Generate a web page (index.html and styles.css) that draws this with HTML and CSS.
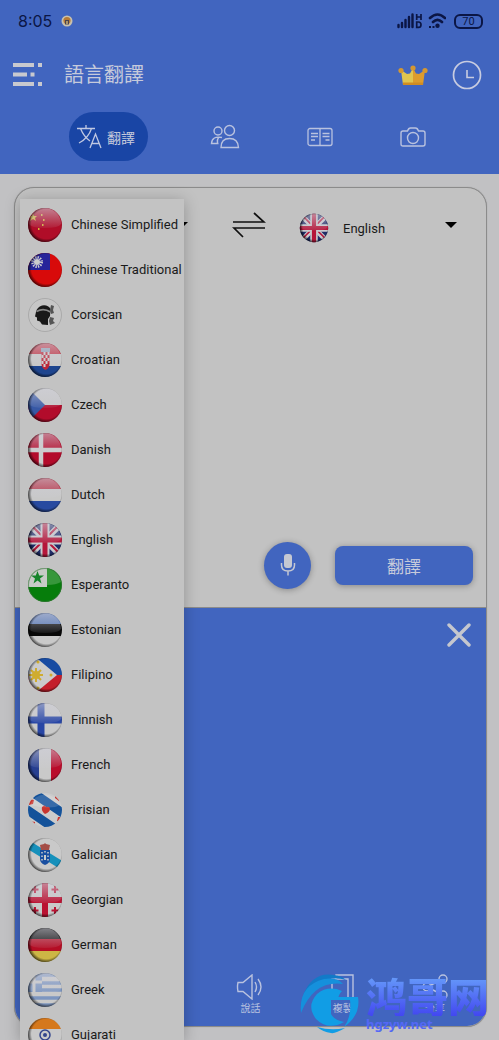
FILE: index.html
```html
<!DOCTYPE html>
<html lang="zh-Hant">
<head>
  <meta charset="UTF-8">
  <meta name="viewport" content="width=device-width, initial-scale=1">
  <title>語言翻譯</title>
  <link rel="stylesheet" href="styles.css">
</head>
<body>

  <!-- shared flag parts -->
  <svg class="defs" width="0" height="0" aria-hidden="true">
    <defs>
      <clipPath id="round"><circle cx="18" cy="18" r="17"/></clipPath>
      <linearGradient id="shine" x1="0" y1="0" x2="0" y2="1">
        <stop offset="0" stop-color="#d0d0da" stop-opacity=".6"/>
        <stop offset="1" stop-color="#d0d0da" stop-opacity=".08"/>
      </linearGradient>
      <radialGradient id="edge" cx=".54" cy=".47" r=".53">
        <stop offset=".82" stop-color="#000" stop-opacity="0"/>
        <stop offset="1" stop-color="#000" stop-opacity=".6"/>
      </radialGradient>
      <symbol id="gloss" viewBox="0 0 36 36">
        <path d="M2 17a16 16 0 0 1 32 0q-2 4-16 4T2 17z" fill="url(#shine)"/>
        <circle cx="18" cy="18" r="17" fill="url(#edge)"/>
      </symbol>
      <symbol id="uk" viewBox="0 0 36 36">
        <g clip-path="url(#round)">
          <path fill="#1f2c68" d="M0 0h36v36H0z"/>
          <path stroke="#c9c9cd" stroke-width="6" d="M2 2l32 32M34 2L2 34"/>
          <path stroke="#b5163a" stroke-width="2" d="M3 2l31 31M33 2L2 33"/>
          <path stroke="#c9c9cd" stroke-width="9" d="M18 0v36M0 18h36"/>
          <path stroke="#b5163a" stroke-width="5" d="M18 0v36M0 18h36"/>
        </g>
        <use href="#gloss"/>
      </symbol>
    </defs>
  </svg>

  <header class="header">
    <div class="status">
      <span class="time">8:05</span>
      <svg class="badge" width="12" height="12" viewBox="0 0 12 12" aria-hidden="true">
        <circle cx="6" cy="6" r="5.500" fill="#c9c1ad"/>
        <circle cx="6" cy="5.500" r="3.600" fill="#b77b35"/>
        <path d="M4 5h4v4.500H4z" fill="#4a4450"/><path d="M5.300 6h1.400v3H5.300z" fill="#d4b878"/>
      </svg>
      <svg class="signal" width="26" height="16" viewBox="0 0 26 16" aria-hidden="true">
        <path d="M1.500 12v2M5 10v4M8.500 7v7M12 4v10M15.500 1.500V14" stroke="#0b1645" stroke-width="2.400" stroke-linecap="round"/>
        <path d="M19.700 1v6M24 1v6M19.700 4H24M19.700 9h1.800q2.500 0 2.500 2.700t-2.500 2.700h-1.800z" fill="none" stroke="#0b1645" stroke-width="1.700"/>
      </svg>
      <svg width="18" height="16" viewBox="0 0 18 16" aria-hidden="true">
        <path d="M2 5q7.500-7 15 0M5 9q4.500-4.500 9 0" fill="none" stroke="#0b1645" stroke-width="2.600" stroke-linecap="round"/>
        <circle cx="9.500" cy="12.800" r="2.200" fill="#0b1645"/><path d="M1 13h2v2H1zM4.500 13h2v2h-2z" fill="#0b1645"/>
      </svg>
      <span class="battery">70</span>
    </div>

    <div class="title-row">
      <button class="icon-btn" aria-label="Menu">
        <svg width="30" height="26" viewBox="0 0 30 26">
          <path d="M0 3h21M25 3h4M0 12.500h14M17.500 12.500h4M0 22h21M25 22h4" stroke="#c8c9cf" stroke-width="4"/>
        </svg>
      </button>
      <h1>語言翻譯</h1>
      <button class="icon-btn" aria-label="Premium">
        <svg width="30" height="24" viewBox="0 0 30 24">
          <path d="M3 7l6 4 3-.5L15 5v17H5z" fill="#e0c54f"/>
          <path d="M27 7l-6 4-3-.5L15 5v17h10z" fill="#dd9c2c"/>
          <path d="M5 19.500h20V22H5z" fill="#d08c22"/>
          <circle cx="3" cy="7.500" r="2.600" fill="#d59730"/><circle cx="15" cy="5" r="2.600" fill="#d59730"/><circle cx="27" cy="7.500" r="2.600" fill="#d59730"/>
        </svg>
      </button>
      <button class="icon-btn" aria-label="History">
        <svg width="30" height="30" viewBox="0 0 30 30" fill="none" stroke="#c8cce0">
          <circle cx="15" cy="15" r="13.500" stroke-width="1.700"/><path d="M15 10v7.500h7" stroke-width="1.600"/>
        </svg>
      </button>
    </div>

    <nav class="tabs">
      <a class="tab active" href="#translate">
        <svg width="26" height="26" viewBox="0 0 26 26" fill="none" stroke="#c0c8e2" stroke-width="1.300">
          <path d="M1 4.500h18M10 1v3.500M15.500 4.500Q12.500 14 3 19M4.500 4.500Q8 13 14 17M14 24l5.500-14L25 24M16 19.500h7"/>
        </svg>
        <span>翻譯</span>
      </a>
      <a class="tab" href="#chat" aria-label="Conversation">
        <svg width="30" height="26" viewBox="0 0 30 26" fill="none" stroke="#b9c2df" stroke-width="1.400">
          <circle cx="19.500" cy="6.500" r="5"/><path d="M11 23.500q0-9 8.500-9t9 9z"/>
          <circle cx="8" cy="7" r="4"/><path d="M12 13.500q-10-2-10.500 6h7M8.500 13.500q-1.500 2-1 5.500"/>
        </svg>
      </a>
      <a class="tab" href="#phrases" aria-label="Phrasebook">
        <svg width="26" height="20" viewBox="0 0 26 20" fill="none" stroke="#b9c2df" stroke-width="1.300">
          <rect x="1" y="1.500" width="24" height="17" rx="2"/>
          <path d="M13 2v16M4 6.500h7M4 9.500h7M4 13h4M15.500 6.500h7M15.500 9.500h7M18.500 13h4"/>
        </svg>
      </a>
      <a class="tab" href="#camera" aria-label="Camera">
        <svg width="26" height="20" viewBox="0 0 26 20" fill="none" stroke="#b9c2df" stroke-width="1.400">
          <path d="M3 4h4.500q1-3 3-3h5q2 0 3 3H23q2 0 2 2v11q0 2-2 2H3q-2 0-2-2V6q0-2 2-2z"/><circle cx="13" cy="11" r="5.500"/>
        </svg>
      </a>
    </nav>
  </header>

  <main class="main">
    <div class="card">
      <section class="source">
        <div class="langs">
          <div class="lang from">
            <select aria-label="From"><option>Chinese Simplified</option></select>
            <svg class="lift" width="12" height="6" viewBox="0 0 12 6"><path d="M0 0h12L6 6z"/></svg>
          </div>
          <button class="icon-btn lift" aria-label="Swap languages">
            <svg width="34" height="26" viewBox="0 0 34 26" fill="none" stroke="#111" stroke-width="1.700">
              <path d="M1 10h31L22 1M33 16H2l9 9"/>
            </svg>
          </button>
          <div class="lang to">
            <svg width="30" height="30"><use href="#uk"/></svg>
            <select aria-label="To"><option>English</option></select>
            <svg class="lift" width="12" height="6" viewBox="0 0 12 6"><path d="M0 0h12L6 6z"/></svg>
          </div>
        </div>
        <textarea class="text-in" aria-label="Text"></textarea>
        <div class="actions">
          <button class="mic" aria-label="Speak">
            <svg width="16" height="22" viewBox="0 0 16 22">
              <rect x="4" y="0" width="8" height="14" rx="3" fill="#c5c8d2"/>
              <path d="M1.500 9v2q0 6 6.500 6t6.500-6V9M8 17v4.500" fill="none" stroke="#c5c8d2" stroke-width="1.500"/>
            </svg>
          </button>
          <button class="go">翻譯</button>
        </div>
      </section>

      <section class="result">
        <button class="icon-btn close" aria-label="Close">
          <svg width="24" height="24" viewBox="0 0 24 24"><path d="M2 2l20 20M22 2L2 22" stroke="#c5c7ce" stroke-width="3.400" stroke-linecap="round"/></svg>
        </button>
        <div class="tools">
          <button class="tool">
            <svg width="28" height="26" viewBox="0 0 28 26" fill="none" stroke="#b9c2df" stroke-width="1.400">
              <path d="M2 8.500h5L16 1v24l-9-7.500H2q-1-4.500 0-9zM19 8q3 5 0 10M22 5q6 8 0 16"/>
            </svg>
            說話
          </button>
          <button class="tool">
            <svg width="28" height="26" viewBox="0 0 28 26" fill="none" stroke="#b9c2df" stroke-width="1.400">
              <path d="M3 5h16v20H3zM7 5V1h17v23h-5"/>
            </svg>
            複製
          </button>
          <button class="tool">
            <svg width="28" height="26" viewBox="0 0 28 26" fill="none" stroke="#b9c2df" stroke-width="1.400">
              <circle cx="22" cy="5" r="4"/><circle cx="6" cy="13" r="4"/><circle cx="22" cy="21" r="4"/><path d="M10 11l8-4M10 15l8 4"/>
            </svg>
            分享
          </button>
        </div>
      </section>
    </div>

    <ul class="menu">
      <li><button>
        <svg viewBox="0 0 36 36"><g clip-path="url(#round)"><path fill="#b00d28" d="M0 0h36v36H0z"/><path fill="#d3b33c" d="M6 6l1 3h3l-2 2 1 3-3-2-3 2 1-3-2-2h3zM14 7h1.500v2H14zM16 12h1.500v2H16zM15 17h1.500v2H15zM11 21h1.500v2H11z"/></g><use href="#gloss"/></svg>
        Chinese Simplified</button></li>
      <li><button>
        <svg viewBox="0 0 36 36"><g clip-path="url(#round)"><path fill="#d80a0a" d="M0 0h36v36H0z"/><path fill="#27249a" d="M0 0h23v18H0z"/><circle cx="10" cy="10" r="4.500" fill="none" stroke="#ccc" stroke-width="3" stroke-dasharray="1.300 1.056"/><circle cx="10" cy="10" r="3" fill="#ccc"/></g><circle cx="18" cy="18" r="17" fill="url(#edge)"/></svg>
        Chinese Traditional</button></li>
      <li><button>
        <svg viewBox="0 0 36 36"><circle cx="18" cy="18" r="16.500" fill="#c6c6c6" stroke="#aaa"/><path fill="#191919" d="M9 15q1-5 6-6.500 6-1 8.500 3.500l-.5 7-2 3v6l-6-.500-2-3-3-1v-3l-2-1z"/><path fill="none" stroke="#888" stroke-width="1.600" d="M9.500 14.500q7-4 14 .500"/><path fill="#555" d="M23 13l1-5 3 1-1 4 1 3-3 1zM23 20l4 1-1 3 2 2-5 2-1-4z"/></svg>
        Corsican</button></li>
      <li><button>
        <svg viewBox="0 0 36 36"><g clip-path="url(#round)"><path fill="#c8c8c8" d="M0 0h36v36H0z"/><path fill="#c03343" d="M0 0h36v12H0z"/><path fill="#1e458f" d="M0 24h36v12H0z"/><path fill="#bd2839" d="M14.500 10h8v12q0 4-4 6-4-2-4-6z"/><path fill="#ccc" d="M16.500 10h2v3h-2zM20.500 10h2v3h-2zM14.500 13h2v3h-2zM18.500 13h2v3h-2zM16.500 16h2v3h-2zM20.500 16h2v3h-2zM14.500 19h2v3h-2zM18.500 19h2v3h-2zM16.500 22h2v3h-2z"/><path fill="#8ea0b5" d="M14 6h9v4h-9z"/></g><use href="#gloss"/></svg>
        Croatian</button></li>
      <li><button>
        <svg viewBox="0 0 36 36"><g clip-path="url(#round)"><path fill="#c8c8c8" d="M0 0h36v18H0z"/><path fill="#b20c2b" d="M0 18h36v18H0z"/><path fill="#3758a5" d="M0 0l18 18L0 36z"/></g><use href="#gloss"/></svg>
        Czech</button></li>
      <li><button>
        <svg viewBox="0 0 36 36"><g clip-path="url(#round)"><path fill="#b30b2b" d="M0 0h36v36H0z"/><path stroke="#cbcbcb" stroke-width="4.500" d="M14 0v36M0 18h36"/></g><use href="#gloss"/></svg>
        Danish</button></li>
      <li><button>
        <svg viewBox="0 0 36 36"><g clip-path="url(#round)"><path fill="#c8c8c8" d="M0 0h36v36H0z"/><path fill="#b52d40" d="M0 0h36v12H0z"/><path fill="#284aa0" d="M0 24h36v12H0z"/></g><use href="#gloss"/></svg>
        Dutch</button></li>
      <li><button>
        <svg viewBox="0 0 36 36"><use href="#uk"/></svg>
        English</button></li>
      <li><button>
        <svg viewBox="0 0 36 36"><g clip-path="url(#round)"><path fill="#067d0b" d="M0 0h36v36H0z"/><path fill="#c7cbc7" d="M0 0h20v20H0z"/><path fill="#15842a" d="M10.500 4l1.700 4.500H17l-4 3 1.500 5-4-3-4 3 1.500-5-4-3h4.800z"/></g><path d="M20 1a17 17 0 0 1 14 14q-5 3-14 3z" fill="#fff" fill-opacity=".2"/><circle cx="18" cy="18" r="16.500" fill="none" stroke="#3c6f3e" stroke-opacity=".6"/></svg>
        Esperanto</button></li>
      <li><button>
        <svg viewBox="0 0 36 36"><g clip-path="url(#round)"><path fill="#c9c9c9" d="M0 0h36v36H0z"/><path fill="#5274b4" d="M0 0h36v12H0z"/><path fill="#080808" d="M0 12h36v12H0z"/></g><use href="#gloss"/></svg>
        Estonian</button></li>
      <li><button>
        <svg viewBox="0 0 36 36"><g clip-path="url(#round)"><path fill="#174ba2" d="M0 0h36v18H0z"/><path fill="#c41f2b" d="M0 18h36v18H0z"/><path fill="#cbcbcb" d="M0-7l30 25L0 43z"/><path stroke="#cfac2f" stroke-width="2" d="M2 18h14M9 11v14M4 13l10 10M14 13L4 23"/><circle cx="9" cy="18" r="4" fill="#cfac2f"/><circle cx="24" cy="18" r="1.500" fill="#cfac2f"/><circle cx="11" cy="5" r="1.500" fill="#cfac2f"/><circle cx="11" cy="31" r="1.500" fill="#cfac2f"/></g><circle cx="18" cy="18" r="17" fill="url(#edge)"/></svg>
        Filipino</button></li>
      <li><button>
        <svg viewBox="0 0 36 36"><g clip-path="url(#round)"><path fill="#c9c9c9" d="M0 0h36v36H0z"/><path stroke="#2846a5" stroke-width="7" d="M14 0v36M0 18h36"/></g><use href="#gloss"/></svg>
        Finnish</button></li>
      <li><button>
        <svg viewBox="0 0 36 36"><g clip-path="url(#round)"><path fill="#c9c9c9" d="M0 0h36v36H0z"/><path fill="#263f91" d="M0 0h12v36H0z"/><path fill="#b90c2b" d="M24 0h12v36H24z"/></g><use href="#gloss"/></svg>
        French</button></li>
      <li><button>
        <svg viewBox="0 0 36 36"><g clip-path="url(#round)"><path fill="#cbcbcb" d="M0 0h36v36H0z"/><path stroke="#14529a" stroke-width="9" d="M2-2l38 26M-4 15l38 26"/><path fill="#c8352f" d="M15 15q3-3 4 0 4-1 4 2 0 3-5 5-4-3-3-7zM28 3l4 3v3l-4-3zM2 7l5 1-1 4-4 1zM31 25l4 0-2 5-3-1zM3 29l5 1v3l-4-1z"/></g><path d="M3 13a16 16 0 0 1 30 0q-8 5-30 0z" fill="#fff" fill-opacity=".15"/></svg>
        Frisian</button></li>
      <li><button>
        <svg viewBox="0 0 36 36"><g clip-path="url(#round)"><path fill="#c9c9c9" d="M0 0h36v36H0z"/><path stroke="#1690bb" stroke-width="8" d="M0 7l36 22"/><path fill="#194ea0" d="M13 13h10v9q0 4-5 6-5-2-5-6z"/><path stroke="#ccc" stroke-width="1.500" stroke-dasharray="1.500 2" d="M15 15v9M21 15v9M18 14v3"/><path fill="#ccc" d="M17 18h2v5h-2z"/><path fill="#a44d46" d="M14 13l-1-5 4-1 1-1 1 1 4 1-1 5z"/></g><circle cx="18" cy="18" r="17" fill="url(#edge)"/></svg>
        Galician</button></li>
      <li><button>
        <svg viewBox="0 0 36 36"><g clip-path="url(#round)"><path fill="#c9c9c9" d="M0 0h36v36H0z"/><path stroke="#ba1232" stroke-width="6" d="M18 0v36M0 18h36"/><path stroke="#ba1232" stroke-width="2" d="M8 4v7M4.500 7.500h7M28 4v7M24.500 7.500h7M8 25v7M4.500 28.500h7M28 25v7M24.500 28.500h7"/></g><use href="#gloss"/></svg>
        Georgian</button></li>
      <li><button>
        <svg viewBox="0 0 36 36"><g clip-path="url(#round)"><path fill="#111" d="M0 0h36v12H0z"/><path fill="#b40d24" d="M0 12h36v12H0z"/><path fill="#cdb645" d="M0 24h36v12H0z"/></g><use href="#gloss"/></svg>
        German</button></li>
      <li><button>
        <svg viewBox="0 0 36 36"><g clip-path="url(#round)"><path fill="#c9c9c9" d="M0 0h36v36H0z"/><path stroke="#7d96c0" stroke-width="3.500" d="M0 3h36M0 11h36M0 18h36M0 26h36M0 33h36"/><path fill="#7d96c0" d="M0 0h15v20H0z"/><path stroke="#c9c9c9" stroke-width="3" d="M7 0v20M0 10h15"/></g><use href="#gloss"/></svg>
        Greek</button></li>
      <li><button>
        <svg viewBox="0 0 36 36"><g clip-path="url(#round)"><path fill="#c9c9c9" d="M0 0h36v36H0z"/><path fill="#d5781c" d="M0 0h36v12H0z"/><path fill="#16842d" d="M0 24h36v12H0z"/><circle cx="18" cy="18" r="5" fill="none" stroke="#33458c" stroke-width="1.500"/><circle cx="18" cy="18" r="2" fill="#33458c"/></g><circle cx="18" cy="18" r="17" fill="url(#edge)"/></svg>
        Gujarati</button></li>
    </ul>
  </main>

  <div class="watermark">
    <svg width="60" height="62" viewBox="0 0 60 62" aria-hidden="true">
      <path d="M3 23Q13-1 34 3q8 1 12 5Q24 1 3 23z" fill="#127ac8"/>
      <path d="M1 41Q-2 14 24 7q13-2 19 5Q14 8 1 41z" fill="#1590dc"/>
      <path d="M42 19Q28 13 17 22q-11 12-1 25 12 12 28 3-10-2-13-8V28h7q0-5 4-9z" fill="#119de5"/>
      <path d="M38 25h20q3 18-14 30 8-11 6-27H38z" fill="#119de5"/>
      <path d="M17 55q14 4 28 1-10 6-14 5-8-1-14-6z" fill="#119de5"/>
    </svg>
    <div class="watermark-text">
      <strong lang="zh-Hans">鸿哥网</strong>
      <span>hgzyw.net</span>
    </div>
  </div>

</body>
</html>
```
FILE: styles.css
```css
* {
  box-sizing: border-box;
}
body {
  margin: 0;
  height: 100vh;
  display: flex;
  flex-direction: column;
  position: relative;
  overflow: hidden;
  background: #c1c1c3;
  color: #1a1a1a;
  font-family: Roboto, "Noto Sans CJK TC", sans-serif;
  font-size: 13px;
}
button,
select,
textarea {
  font: inherit;
  color: inherit;
  background: none;
  border: 0;
  padding: 0;
  margin: 0;
}
svg {
  display: block;
  flex: none;
}
.defs {
  position: absolute;
}

/* header */
.header {
  background: #4165bf;
  color: #c6cadb;
  padding-bottom: 13px;
}
.status {
  display: flex;
  align-items: center;
  gap: 5px;
  height: 42px;
  padding: 0 16px 0 18px;
  color: #0b1645;
}
.time {
  font-family: Inter, sans-serif;
  font-size: 16px;
}
.badge {
  margin-left: 4px;
}
.signal {
  margin-left: auto;
}
.battery {
  width: 29px;
  height: 15px;
  margin-left: 3px;
  border: 2px solid #0b1645;
  border-radius: 6px;
  font-size: 11px;
  line-height: 12px;
  text-align: center;
}
.title-row {
  display: flex;
  align-items: center;
  gap: 24px;
  height: 66px;
  padding: 0 17px 0 13px;
}
.title-row h1 {
  flex: 1;
  margin: 0 0 4px -3px;
  font-size: 20px;
  font-weight: 400;
}
.tabs {
  display: flex;
  align-items: center;
  justify-content: space-between;
  padding: 4px 73px 0 69px;
}
.tab {
  color: inherit;
  text-decoration: none;
}
.tab.active {
  display: flex;
  align-items: center;
  gap: 5px;
  height: 49px;
  margin-right: -5px;
  padding: 0 13px 0 7px;
  border-radius: 25px;
  background: #1945a5;
  font-size: 14px;
}

/* translate card */
.main {
  flex: 1;
  min-height: 0;
  display: flex;
  position: relative;
  padding: 13px 12px 13px 14px;
}
.card {
  flex: 1;
  display: flex;
  flex-direction: column;
  border: 1px solid #8b8b8b;
  border-radius: 20px;
  background: #c2c2c2;
  box-shadow: 0 0 1px #8b8b8b;
  overflow: hidden;
}
.source,
.result {
  flex: 1;
  display: flex;
  flex-direction: column;
}
.langs {
  display: flex;
  align-items: center;
  height: 80px;
  padding: 0 29px 0 13px;
}
.lang {
  display: flex;
  align-items: center;
}
.lang select {
  flex: 1;
  min-width: 0;
  appearance: none;
}
.from {
  flex: 1;
  margin-right: 44px;
}
.to {
  flex: 0 1 158px;
  gap: 14px;
  margin-left: 33px;
}
.lift {
  margin-bottom: 6px;
}
.text-in {
  flex: 1;
  resize: none;
}
.actions {
  display: flex;
  align-items: center;
  justify-content: flex-end;
  gap: 24px;
  padding: 0 13px 18px;
}
.mic {
  display: grid;
  place-items: center;
  width: 47px;
  height: 47px;
  border-radius: 50%;
  background: #4165bf;
  box-shadow: 0 1px 6px rgba(0,0,0,0.3);
}
.go {
  width: 138px;
  height: 39px;
  border-radius: 8px;
  background: #4165bf;
  color: #c6cadb;
  font-size: 17px;
  box-shadow: 0 1px 6px rgba(0,0,0,0.3);
}
.result {
  justify-content: space-between;
  background: #4165bf;
  border-top: 1px solid #8b8b8b;
}
.close {
  align-self: flex-end;
  margin: 15px 15px 0 0;
}
.tools {
  display: grid;
  grid-template-columns: repeat(5, 1fr);
  padding: 0 5px 11px;
}
.tool {
  display: flex;
  flex-direction: column;
  align-items: center;
  color: #b9c2df;
  font-size: 10px;
}
.tool:first-child {
  grid-column: 3;
}

/* open language list */
.menu {
  position: absolute;
  top: 25px;
  bottom: 0;
  left: 20px;
  width: 164px;
  margin: 0;
  padding: 3px 0 0;
  list-style: none;
  overflow: hidden;
  background: #c3c3c3;
  box-shadow: 0 2px 14px rgba(0,0,0,0.25);
}
.menu button {
  display: flex;
  align-items: center;
  gap: 8px;
  width: 100%;
  height: 45px;
  padding-left: 7px;
  white-space: nowrap;
}
.menu svg {
  width: 36px;
  height: 36px;
}

/* watermark */
.watermark {
  position: absolute;
  right: 10px;
  bottom: 6px;
  display: flex;
  align-items: center;
  gap: 6px;
}
.watermark-text {
  display: flex;
  flex-direction: column;
  color: #5468f5;
}
.watermark strong {
  font-family: "Noto Sans CJK SC", sans-serif;
  font-size: 41px;
  font-weight: 900;
  line-height: 42px;
  background: linear-gradient(#68a0fa, #4247f0);
  background-clip: text;
  color: transparent;
}
.watermark span {
  font-family: "Noto Sans", sans-serif;
  font-size: 13px;
  font-weight: 700;
  line-height: 16px;
}
```
